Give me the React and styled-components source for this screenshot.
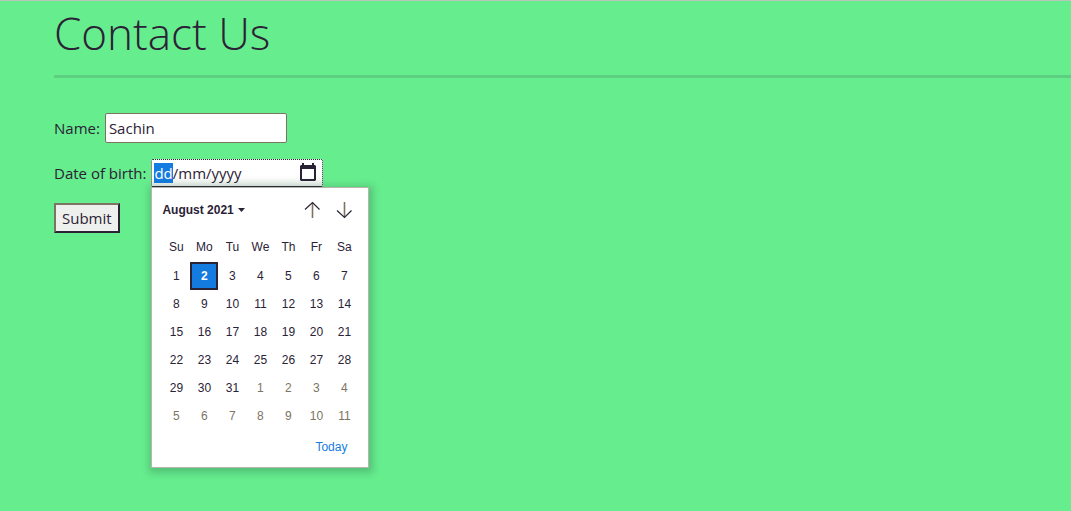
import React, { useEffect, useRef } from "react";
import styled, { createGlobalStyle } from "styled-components";

const GlobalStyle = createGlobalStyle`
  * { box-sizing: border-box; }
  body {
    margin: 0;
    background: #66ed8e;
    color: #2b2236;
    font-family: "Open Sans", "Noto Sans", sans-serif;
    font-size: 15px;
    line-height: 24px;
  }
`;

const Page = styled.main`
  min-height: 100vh;
  padding: 4px 0 40px 54px;
  border-top: 1px solid #b9c6b9;
`;

const Title = styled.h1`
  margin: 0;
  font-size: 44px;
  line-height: 56px;
  font-weight: 300;
`;

const Rule = styled.hr`
  margin: 14px 0 35px;
  border: 0;
  height: 3px;
  background: #5ccf80;
`;

const Form = styled.form`
  display: flex;
  flex-direction: column;
  align-items: flex-start;
  gap: 16px;
`;

const Row = styled.div`
  display: flex;
  align-items: center;
  gap: 5px;
`;

const TextInput = styled.input`
  width: 182px;
  height: 30px;
  padding: 0 3px;
  border: 1px solid #7c7463;
  border-radius: 2px;
  background: #fff;
  color: inherit;
  font: inherit;
`;

const DateField = styled.div`
  position: relative;
  display: flex;
  align-items: center;
  width: 172px;
  height: 28px;
  padding: 0 5px 0 2px;
  border: 1px dotted #2b2236;
  border-bottom: 1px solid #2b2236;
  border-radius: 2px;
  background: linear-gradient(#fff 60%, #e9efe9);
`;

const DateInput = styled.input`
  flex: 1;
  min-width: 0;
  height: 22px;
  padding: 0;
  border: 0;
  outline: 0;
  background: transparent;
  color: #2b2236;
  font: inherit;
  line-height: 20px;
  &::selection { background: #147be0; color: #fff; }
`;

const IconButton = styled.button`
  display: flex;
  padding: 0;
  border: 0;
  background: transparent;
  color: inherit;
`;

const SubmitButton = styled.button`
  height: 30px;
  padding: 0 6px;
  border: 2px solid;
  border-color: #7c7463 #2b2236 #2b2236 #7c7463;
  background: #eef0ee;
  color: inherit;
  font: inherit;
`;

const Popover = styled.div`
  position: absolute;
  z-index: 1;
  top: calc(100% + 1px);
  left: -1px;
  padding: 10px;
  border: 1px solid #b8b4b0;
  background: #fff;
  box-shadow: 1px 2px 7px 3px rgba(40, 100, 70, 0.3);
  font-family: "Liberation Sans", Arial, sans-serif;
  font-size: 12px;
  line-height: 16px;
`;

const CalendarHeader = styled.div`
  display: flex;
  align-items: center;
  justify-content: space-between;
  height: 24px;
  padding-right: 6px;
`;

const MonthButton = styled.button`
  display: flex;
  align-items: center;
  gap: 4px;
  padding: 0;
  border: 0;
  background: transparent;
  color: inherit;
  font: inherit;
  font-weight: 700;
`;

const Arrows = styled.div`
  display: flex;
  gap: 16px;
`;

const Grid = styled.table`
  margin-top: 10px;
  border-collapse: collapse;
  th, td {
    width: 28px;
    height: 28px;
    padding: 0;
    text-align: center;
    font-weight: 400;
  }
  th { height: 30px; }
`;

const Day = styled.button`
  display: block;
  width: 28px;
  height: 28px;
  padding: 0;
  border: ${(p) => (p.$selected ? "2px solid #2b2236" : "0")};
  background: ${(p) => (p.$selected ? "#147be0" : "transparent")};
  color: ${(p) => (p.$selected ? "#fff" : p.$outside ? "#7c7463" : "#2b2236")};
  font: inherit;
  font-weight: ${(p) => (p.$selected ? 700 : 400)};
`;

const CalendarFooter = styled.div`
  display: flex;
  justify-content: flex-end;
  padding: 9px 11px 2px 0;
`;

const TodayButton = styled.button`
  padding: 0;
  border: 0;
  background: transparent;
  color: #147be0;
  font: inherit;
`;

const CalendarIcon = () => (
  <svg width="18" height="20" viewBox="0 0 18 20" aria-hidden="true">
    <path
      fill="currentColor"
      fillRule="evenodd"
      d="M3 0h2v2h8V0h2v2h1l1 1v14l-1 1H2l-1-1V3l1-1h1zM3 6v10h12V6z"
    />
  </svg>
);

const ArrowIcon = ({ down }) => (
  <svg width="16" height="18" viewBox="0 0 16 18" fill="none" aria-hidden="true">
    <path
      d={down ? "M8.5 1v15" : "M8.5 2v15"}
      stroke="#7c7463"
      strokeWidth="1.6"
    />
    <path
      d={down ? "M1 9.5l7.5 7 7-7" : "M1 8.5l7.5-7 7 7"}
      stroke="#2b2236"
      strokeWidth="1.2"
    />
  </svg>
);

const CaretIcon = () => (
  <svg width="7" height="4" viewBox="0 0 7 4" aria-hidden="true">
    <path d="M0 0h7L3.5 4z" fill="currentColor" />
  </svg>
);

const weekdays = ["Su", "Mo", "Tu", "We", "Th", "Fr", "Sa"];
const weeks = Array.from({ length: 6 }, (_, w) =>
  Array.from({ length: 7 }, (_, d) => {
    const n = w * 7 + d + 1;
    return { label: n > 31 ? n - 31 : n, outside: n > 31, selected: n === 2 };
  })
);

function Calendar() {
  return (
    <Popover role="dialog" aria-label="Choose date">
      <CalendarHeader>
        <MonthButton type="button">
          August 2021 <CaretIcon />
        </MonthButton>
        <Arrows>
          <IconButton type="button" aria-label="Previous month">
            <ArrowIcon />
          </IconButton>
          <IconButton type="button" aria-label="Next month">
            <ArrowIcon down />
          </IconButton>
        </Arrows>
      </CalendarHeader>
      <Grid>
        <thead>
          <tr>
            {weekdays.map((name) => (
              <th key={name} scope="col">{name}</th>
            ))}
          </tr>
        </thead>
        <tbody>
          {weeks.map((week, i) => (
            <tr key={i}>
              {week.map((day) => (
                <td key={day.label}>
                  <Day type="button" $outside={day.outside} $selected={day.selected}>
                    {day.label}
                  </Day>
                </td>
              ))}
            </tr>
          ))}
        </tbody>
      </Grid>
      <CalendarFooter>
        <TodayButton type="button">Today</TodayButton>
      </CalendarFooter>
    </Popover>
  );
}

export default function App() {
  const dateRef = useRef(null);

  useEffect(() => {
    dateRef.current.focus();
    dateRef.current.setSelectionRange(0, 2);
  }, []);

  return (
    <>
      <GlobalStyle />
      <Page>
        <Title>Contact Us</Title>
        <Rule />
        <Form onSubmit={(e) => e.preventDefault()}>
          <Row>
            <label htmlFor="name">Name:</label>
            <TextInput id="name" type="text" defaultValue="Sachin" />
          </Row>
          <Row>
            <label htmlFor="dob">Date of birth:</label>
            <DateField>
              <DateInput id="dob" ref={dateRef} type="text" defaultValue="dd/mm/yyyy" />
              <IconButton type="button" aria-label="Open calendar">
                <CalendarIcon />
              </IconButton>
              <Calendar />
            </DateField>
          </Row>
          <SubmitButton type="submit">Submit</SubmitButton>
        </Form>
      </Page>
    </>
  );
}
